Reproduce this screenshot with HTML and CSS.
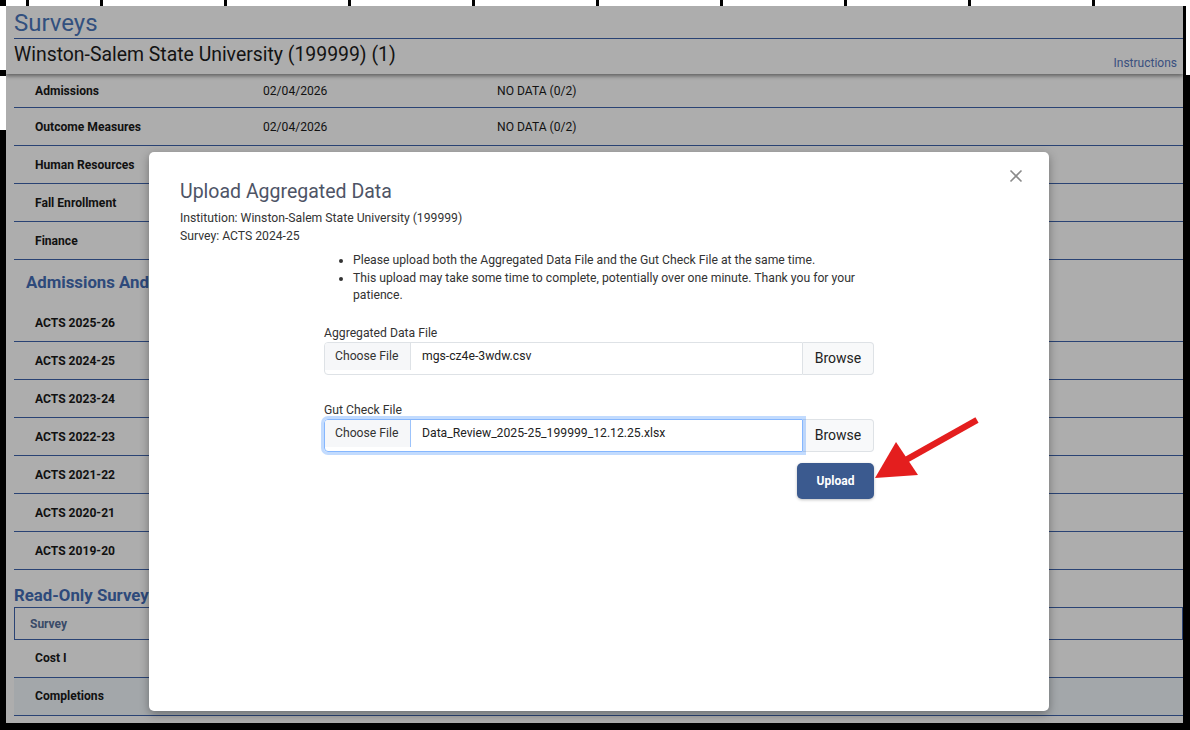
FILE: index.html
```html
<!DOCTYPE html>
<html lang="en">
<head>
<meta charset="utf-8">
<title>Surveys</title>
<link rel="stylesheet" href="styles.css">
</head>
<body>
<div class="frame-top"></div>
<div class="frame-mid">
  <div class="frame-left"><div class="fl-white"></div><div class="fl-tick"></div><div class="fl-white2"></div></div>
  <div class="viewport">
    <header class="page-head">
      <h1 class="page-title">Surveys</h1>
      <div class="inst-row">
        <h2 class="inst-name">Winston-Salem State University (199999) (1)</h2>
        <a class="instructions">Instructions</a>
      </div>
    </header>
    <div class="rows">
      <div class="row row-first"><span class="lbl">Admissions</span><span class="val">02/04/2026</span><span class="val">NO DATA (0/2)</span></div>
      <div class="row"><span class="lbl">Outcome Measures</span><span class="val">02/04/2026</span><span class="val">NO DATA (0/2)</span></div>
      <div class="row"><span class="lbl">Human Resources</span><span class="val"></span><span class="val"></span></div>
      <div class="row"><span class="lbl">Fall Enrollment</span><span class="val"></span><span class="val"></span></div>
      <div class="row"><span class="lbl">Finance</span><span class="val"></span><span class="val"></span></div>
      <h3 class="section-head">Admissions And Graduation Rates Surveys</h3>
      <div class="row"><span class="lbl">ACTS 2025-26</span></div>
      <div class="row"><span class="lbl">ACTS 2024-25</span></div>
      <div class="row"><span class="lbl">ACTS 2023-24</span></div>
      <div class="row"><span class="lbl">ACTS 2022-23</span></div>
      <div class="row"><span class="lbl">ACTS 2021-22</span></div>
      <div class="row"><span class="lbl">ACTS 2020-21</span></div>
      <div class="row"><span class="lbl">ACTS 2019-20</span></div>
      <h3 class="section-head2">Read-Only Surveys</h3>
      <div class="thead"><span>Survey</span></div>
      <div class="row row-tail"><span class="lbl">Cost I</span></div>
      <div class="row row-tail row-hover"><span class="lbl">Completions</span></div>
    </div>
    <div class="backdrop"></div>
    <div class="modal">
      <svg class="close" width="14" height="14" viewBox="0 0 14 14"><path d="M1.5 1.5 L12.5 12.5 M12.5 1.5 L1.5 12.5" stroke="#8a8a8a" stroke-width="1.6" fill="none"/></svg>
      <h4 class="modal-title">Upload Aggregated Data</h4>
      <p class="meta">Institution: Winston-Salem State University (199999)<br>Survey: ACTS 2024-25</p>
      <div class="form-col">
        <ul class="notes">
          <li>Please upload both the Aggregated Data File and the Gut Check File at the same time.</li>
          <li>This upload may take some time to complete, potentially over one minute. Thank you for your patience.</li>
        </ul>
        <label class="flabel">Aggregated Data File</label>
        <div class="fgroup">
          <div class="finput"><span class="choose">Choose File</span><span class="fname">mgs-cz4e-3wdw.csv</span></div>
          <span class="browse">Browse</span>
        </div>
        <label class="flabel flabel2">Gut Check File</label>
        <div class="fgroup">
          <div class="finput focused"><span class="choose">Choose File</span><span class="fname">Data_Review_2025-25_199999_12.12.25.xlsx</span></div>
          <span class="browse">Browse</span>
        </div>
        <div class="actions"><button class="upload">Upload</button></div>
      </div>
    </div>
    <svg class="arrow" width="1177" height="717" viewBox="0 0 1177 717">
      <line x1="971" y1="414" x2="898" y2="455" stroke="#e41e1e" stroke-width="6.5" stroke-linecap="butt"/>
      <polygon points="869,472 890,436 912,469" fill="#e41e1e"/>
    </svg>
  </div>
  <div class="frame-right"><div class="fr-top"></div></div>
</div>
</body>
</html>
```
FILE: styles.css
```css
* { box-sizing: border-box; }
html, body { margin: 0; padding: 0; }
body {
  width: 1190px;
  height: 730px;
  overflow: hidden;
  background: #000;
  font-family: Roboto, "Liberation Sans", Arial, sans-serif;
}
.frame-top {
  height: 6px;
  background:
    linear-gradient(to right, #000 0 6px, transparent 6px),
    repeating-linear-gradient(to right, #000 0 3px, #fff 3px 124px);
  background-position: 0 0, 100px 0;
  background-color: #fff;
}
.frame-mid { display: flex; height: 717px; }
.frame-left { width: 6px; display: flex; flex-direction: column; }
.fl-white { height: 64px; background: #fff; }
.fl-tick { height: 6px; background: #000; }
.fl-white2 { height: 54px; background: #fff; }
.frame-right { width: 7px; }
.fr-top { height: 69px; margin-left: 3px; background: #fff; }

.viewport {
  width: 1177px;
  height: 717px;
  position: relative;
  overflow: hidden;
  background: #fff;
}
.page-head {
  position: relative;
  z-index: 1;
  height: 68px;
  padding-left: 8px;
  background: #fff;
  box-shadow: 0 2px 4px rgba(0,0,0,.45);
}
.page-title {
  margin: 0;
  padding-top: 2px;
  font-weight: 400;
  font-size: 24px;
  line-height: 30px;
  color: #4b76bb;
  border-bottom: 1px solid #3f64ab;
}
.inst-row {
  display: flex;
  justify-content: space-between;
  align-items: flex-start;
  padding-right: 6px;
}
.inst-name {
  margin: 4px 0 0;
  font-weight: 400;
  font-size: 19.4px;
  line-height: 24px;
  color: #1c1c1c;
}
.instructions {
  margin-top: 17px;
  font-size: 12px;
  line-height: 14px;
  color: #5676bc;
}
.rows { margin-left: 8px; }
.row {
  display: grid;
  grid-template-columns: 249px 234px 1fr;
  align-items: center;
  height: 38px;
  border-bottom: 1px solid #3f64ab;
  font-size: 12.1px;
  line-height: 14px;
  color: #1a1a1a;
}
.row-first { height: 34px; }
.row-tail { padding-bottom: 2px; }
.row-hover { background: #f0f7fb; }
.lbl { padding-left: 21px; font-weight: 700; }
.section-head {
  margin: 0;
  height: 44px;
  padding-top: 1px;
  padding-left: 12px;
  font-size: 16.8px;
  line-height: 42px;
  font-weight: 700;
  color: #446db5;
  white-space: nowrap;
}
.section-head2 {
  margin: 0;
  height: 37px;
  padding-top: 15px;
  font-size: 16.8px;
  line-height: 20px;
  font-weight: 700;
  color: #446db5;
  white-space: nowrap;
}
.thead {
  height: 33px;
  border: 1px solid #3f64ab;
  display: flex;
  align-items: center;
  padding-left: 15px;
  font-size: 12px;
  font-weight: 700;
  color: #566e98;
}
.backdrop {
  position: absolute;
  inset: 0;
  z-index: 2;
  background: rgba(0,0,0,.32);
}
.modal {
  position: absolute;
  z-index: 3;
  left: 143px;
  top: 146px;
  width: 900px;
  height: 559px;
  background: #fff;
  border-radius: 5px;
  box-shadow: 0 3px 10px rgba(0,0,0,.35);
  padding: 28px 31px 0;
  color: #333;
}
.close { position: absolute; left: 860px; top: 17px; }
.modal-title {
  margin: 0;
  font-weight: 400;
  font-size: 19.5px;
  line-height: 24px;
  color: #4e5466;
}
.meta {
  margin: 5px 0 0;
  font-size: 12.2px;
  line-height: 18px;
  color: #333;
}
.form-col { width: 550px; margin: 7px auto 0; }
.notes {
  margin: 0;
  padding-left: 29px;
  font-size: 12.2px;
  line-height: 17.5px;
  color: #333;
}
.flabel {
  display: block;
  margin-top: 21px;
  margin-bottom: 2px;
  font-size: 12.2px;
  line-height: 14px;
  color: #333;
}
.flabel2 { margin-top: 28px; }
.fgroup { display: flex; height: 33px; }
.finput {
  flex: 1;
  display: flex;
  align-items: flex-start;
  border: 1px solid #dee2e6;
  border-radius: 4px 0 0 4px;
  overflow: hidden;
  font-size: 12.2px;
  color: #222;
}
.finput.focused {
  border-color: #86b7fe;
  box-shadow: 0 0 0 3px rgba(13,110,253,.25);
  position: relative;
  z-index: 1;
}
.choose {
  width: 86px;
  height: 27px;
  padding-left: 10px;
  line-height: 26px;
  background: #f6f7f9;
  border-right: 1px solid #dee2e6;
  color: #333;
}
.focused .choose { border-right-color: #9cc3fb; }
.fname { margin-left: 11px; line-height: 26px; }
.browse {
  width: 71px;
  border: 1px solid #dee2e6;
  border-left: 0;
  border-radius: 0 4px 4px 0;
  background: #f8f9fa;
  display: flex;
  align-items: center;
  justify-content: center;
  font-size: 14px;
  color: #222;
}
.actions { display: flex; justify-content: flex-end; margin-top: 11px; }
.upload {
  width: 77px;
  height: 36px;
  border: 0;
  border-radius: 5px;
  background: #3b5a8f;
  color: #fff;
  font-family: Roboto, "Liberation Sans", Arial, sans-serif;
  font-weight: 700;
  font-size: 12px;
  box-shadow: 0 1px 3px rgba(0,0,0,.25);
}
.arrow {
  position: absolute;
  left: 0;
  top: 0;
  z-index: 4;
  pointer-events: none;
}
```
